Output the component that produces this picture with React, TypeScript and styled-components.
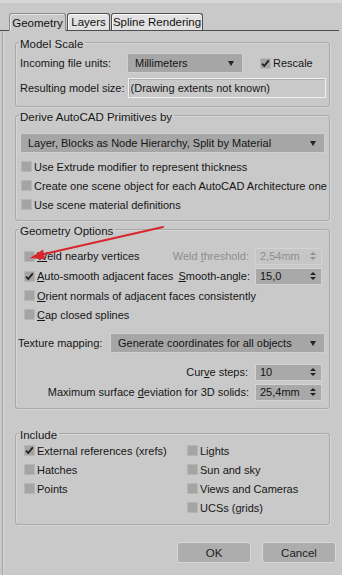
import React from 'react';
import styled, { createGlobalStyle } from 'styled-components';

const GlobalStyle = createGlobalStyle`
  *, *::before, *::after {
    box-sizing: border-box;
  }
  html, body {
    margin: 0;
    padding: 0;
    background: #c9c9c9;
  }
  body {
    font-family: 'Liberation Sans', Arial, sans-serif;
    font-size: 11px;
    color: #161616;
  }
`;

const Window = styled.div`
  position: relative;
  width: 342px;
  height: 575px;
  background: #c9c9c9;
  padding-top: 10px;
  display: flex;
  flex-direction: column;
  overflow: hidden;
  border-top: 3px solid #d6d6d6;
`;

const TabBar = styled.div`
  display: flex;
  align-items: flex-end;
  padding-left: 9px;
  gap: 1px;
  height: 18px;
  margin-right: 3px;
  border-bottom: 1px solid #4e4e4e;
`;

const Tab = styled.div<{ $active?: boolean; $w: number }>`
  display: flex;
  align-items: center;
  justify-content: center;
  width: ${({ $w }) => $w}px;
  height: ${({ $active }) => ($active ? 18 : 17)}px;
  border: 1px solid ${({ $active }) => ($active ? '#8c8c8c' : '#4e4e4e')};
  border-bottom: none;
  border-radius: 3px 3px 0 0;
  background: ${({ $active }) => ($active ? '#c9c9c9' : '#e2e2e2')};
  box-shadow: ${({ $active }) => ($active ? 'inset 1px 1px 0 #e6e6e6' : 'inset 1px 1px 0 #fafafa')};
  font-size: 11.5px;
  color: #111;
  margin-bottom: ${({ $active }) => ($active ? -1 : 0)}px;
  position: relative;
`;

const Panel = styled.div`
  flex: 1;
  margin: 0 3px 0 2px;
  border-left: 1px solid #a2a2a2;
  box-shadow: inset 1px 0 0 #d8d8d8;
  padding: 3px 9px 0 12px;
  display: flex;
  flex-direction: column;
`;

const Group = styled.fieldset<{ $h: number; $pt?: number; $mt?: number }>`
  margin: ${({ $mt }) => $mt ?? 0}px 0 0 0;
  min-width: 0;
  height: ${({ $h }) => $h}px;
  border: 1px solid #a9a9a9;
  border-radius: 3px;
  box-shadow: inset 1px 1px 0 #d6d6d6, 1px 1px 0 #d6d6d6;
  padding: ${({ $pt }) => $pt ?? 0}px 3px 0 4px;
  display: flex;
  flex-direction: column;
`;

const Legend = styled.legend`
  padding: 4px 2px 0 1px;
  margin-left: -1px;
  line-height: 12px;
  font-size: 11.5px;
`;

const Row = styled.div<{ $h?: number; $end?: boolean; $pt?: number }>`
  display: flex;
  align-items: center;
  justify-content: ${({ $end }) => ($end ? 'flex-end' : 'flex-start')};
  height: ${({ $h }) => $h ?? 19}px;
  padding-top: ${({ $pt }) => $pt ?? 0}px;
  flex-shrink: 0;
`;

const Label = styled.span<{ $w?: number; $dim?: boolean; $ml?: number; $mr?: number }>`
  width: ${({ $w }) => ($w ? `${$w}px` : 'auto')};
  margin-left: ${({ $ml }) => $ml ?? 0}px;
  margin-right: ${({ $mr }) => $mr ?? 0}px;
  flex-shrink: 0;
  color: ${({ $dim }) => ($dim ? '#8d8d8d' : '#161616')};
  white-space: nowrap;
`;

const U = styled.span`
  text-decoration: underline;
  text-underline-offset: 1px;
`;

const Select = styled.div<{ $w?: number; $flex?: boolean }>`
  display: flex;
  align-items: center;
  justify-content: space-between;
  width: ${({ $w }) => ($w ? `${$w}px` : 'auto')};
  flex: ${({ $flex }) => ($flex ? 1 : 'none')};
  min-width: 0;
  height: 20px;
  padding: 0 8px 0 7px;
  background: #a6a6a6;
  border: 1px solid #d0d0d0;
  color: #141414;
  white-space: nowrap;
`;

const Caret = styled.span`
  width: 0;
  height: 0;
  border-left: 3.5px solid transparent;
  border-right: 3.5px solid transparent;
  border-top: 5px solid #222;
`;

const TextBox = styled.div`
  flex: 1;
  height: 20px;
  display: flex;
  align-items: center;
  padding-left: 2px;
  border: 1px solid #f0f0f0;
  box-shadow: inset 1px 1px 0 #b0b0b0;
  white-space: nowrap;
  overflow: hidden;
`;

const Spinner = styled.div<{ $dim?: boolean }>`
  width: 67px;
  height: 17px;
  display: flex;
  align-items: center;
  justify-content: space-between;
  padding: 0 5px 0 4px;
  margin-right: 4px;
  background: ${({ $dim }) => ($dim ? '#c6c6c6' : '#a9a9a9')};
  border: 1px solid #d3d3d3;
  color: ${({ $dim }) => ($dim ? '#8f8f8f' : '#141414')};
`;

const Arrows = styled.span`
  display: flex;
  flex-direction: column;
  gap: 2px;
`;

const Tri = styled.span<{ $up?: boolean; $dim?: boolean }>`
  width: 0;
  height: 0;
  border-left: 3px solid transparent;
  border-right: 3px solid transparent;
  ${({ $up, $dim }) =>
    $up
      ? `border-bottom: 3px solid ${$dim ? '#8f8f8f' : '#222'};`
      : `border-top: 3px solid ${$dim ? '#8f8f8f' : '#222'};`}
`;

const CheckRow = styled.label<{ $ml?: number }>`
  display: flex;
  align-items: center;
  height: 19px;
  gap: 2px;
  flex-shrink: 0;
  margin-left: ${({ $ml }) => $ml ?? 4}px;
  white-space: nowrap;
`;

const Box = styled.span`
  width: 11px;
  height: 11px;
  background: #a4a4a4;
  border: 1px solid #b6b6b6;
  display: flex;
  align-items: center;
  justify-content: center;
  flex-shrink: 0;
`;

const Columns = styled.div`
  display: flex;
`;

const Column = styled.div<{ $w?: number }>`
  width: ${({ $w }) => ($w ? `${$w}px` : 'auto')};
  display: flex;
  flex-direction: column;
`;

const Buttons = styled.div`
  display: flex;
  justify-content: flex-end;
  gap: 11px;
  margin-top: 17px;
  margin-right: -6px;
`;

const Button = styled.button`
  width: 74px;
  height: 21px;
  background: #adadad;
  border: 1px solid #d8d8d8;
  border-radius: 3px;
  font-family: inherit;
  font-size: 11.5px;
  color: #202020;
  padding: 0;
`;

const Overlay = styled.svg`
  position: absolute;
  left: 0;
  top: -3px;
  pointer-events: none;
`;

const Check: React.FC<{ on?: boolean; ml?: number; children: React.ReactNode }> = ({ on, ml, children }) => (
  <CheckRow $ml={ml}>
    <Box>
      {on && (
        <svg width="9" height="9" viewBox="0 0 9 9">
          <path d="M1 4.6 L3.2 7 L7.8 1.4" stroke="#1c1c1c" strokeWidth="1.7" fill="none" />
        </svg>
      )}
    </Box>
    <span>{children}</span>
  </CheckRow>
);

const Spin: React.FC<{ value: string; dim?: boolean }> = ({ value, dim }) => (
  <Spinner $dim={dim}>
    <span>{value}</span>
    <Arrows>
      <Tri $up $dim={dim} />
      <Tri $dim={dim} />
    </Arrows>
  </Spinner>
);

export default function App() {
  return (
    <>
      <GlobalStyle />
      <Window>
        <TabBar>
          <Tab $active $w={57}>Geometry</Tab>
          <Tab $w={43}>Layers</Tab>
          <Tab $w={92}>Spline Rendering</Tab>
        </TabBar>
        <Panel>
          <Group $h={73}>
            <Legend>Model Scale</Legend>
            <Row $h={26}>
              <Label $w={107}>Incoming file units:</Label>
              <Select $w={116}>
                Millimeters <Caret />
              </Select>
              <Check on ml={17}>Rescale</Check>
            </Row>
            <Row $h={24}>
              <Label $mr={3}>Resulting model size:</Label>
              <TextBox>(Drawing extents not known)</TextBox>
            </Row>
          </Group>

          <Group $h={114}>
            <Legend>Derive AutoCAD Primitives by</Legend>
            <Row $h={34} $pt={6}>
              <Select $flex style={{ marginRight: 1 }}>
                Layer, Blocks as Node Hierarchy, Split by Material <Caret />
              </Select>
            </Row>
            <Check ml={1}>Use Extrude modifier to represent thickness</Check>
            <Check ml={1}>Create one scene object for each AutoCAD Architecture one</Check>
            <Check ml={1}>Use scene material definitions</Check>
          </Group>

          <Group $h={188} $pt={9}>
            <Legend>Geometry Options</Legend>
            <Row $h={20}>
              <Check>
                <U>W</U>eld nearby vertices
              </Check>
              <span style={{ flex: 1 }} />
              <Label $dim $mr={6}>
                Weld <U>t</U>hreshold:
              </Label>
              <Spin value="2,54mm" dim />
            </Row>
            <Row $h={20}>
              <Check on>
                <U>A</U>uto-smooth adjacent faces
              </Check>
              <span style={{ flex: 1 }} />
              <Label $mr={5}>
                <U>S</U>mooth-angle:
              </Label>
              <Spin value="15,0" />
            </Row>
            <Check>
              <U>O</U>rient normals of adjacent faces consistently
            </Check>
            <Check>
              <U>C</U>ap closed splines
            </Check>
            <Row $h={38}>
              <Label $w={92} $ml={-2}>Texture mapping:</Label>
              <Select $flex style={{ marginRight: 1 }}>
                Generate coordinates for all objects <Caret />
              </Select>
            </Row>
            <Row $h={20} $end>
              <Label $mr={7}>
                Cur<U>v</U>e steps:
              </Label>
              <Spin value="10" />
            </Row>
            <Row $h={20} $end>
              <Label $mr={6}>
                Maximum surface <U>d</U>eviation for 3D solids:
              </Label>
              <Spin value="25,4mm" />
            </Row>
          </Group>

          <Group $h={100} $mt={16}>
            <Legend>Include</Legend>
            <Columns>
              <Column $w={163}>
                <Check on>External references (xrefs)</Check>
                <Check>Hatches</Check>
                <Check>Points</Check>
              </Column>
              <Column>
                <Check>Lights</Check>
                <Check>Sun and sky</Check>
                <Check>Views and Cameras</Check>
                <Check>UCSs (grids)</Check>
              </Column>
            </Columns>
          </Group>

          <Buttons>
            <Button>OK</Button>
            <Button>Cancel</Button>
          </Buttons>
        </Panel>

        <Overlay width="342" height="575" viewBox="0 0 342 575">
          <path d="M163 227 L42 254.5" stroke="#d9262c" strokeWidth="2" fill="none" strokeLinecap="round" />
          <path d="M30 258 L43 249.5 L45 259.5 Z" fill="#d9262c" />
        </Overlay>
      </Window>
    </>
  );
}
